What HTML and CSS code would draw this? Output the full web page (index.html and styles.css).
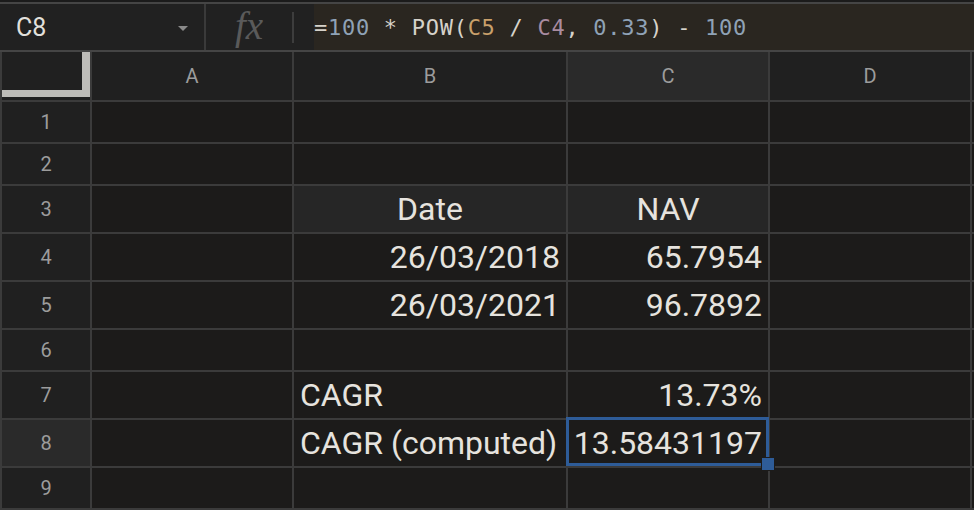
FILE: index.html
```html
<!DOCTYPE html>
<html lang="en">
<head>
<meta charset="utf-8">
<title>Sheet</title>
<link rel="stylesheet" href="styles.css">
</head>
<body>
<div class="app">
  <div class="fbar">
    <div class="namebox"><span class="ref">C8</span><span class="caret"></span></div>
    <div class="fx">fx</div>
    <div class="sep"></div>
    <div class="gap"></div>
    <div class="formula"><span class="op">=</span><span class="num">100</span><span class="op"> * POW(</span><span class="r1">C5</span><span class="op"> / </span><span class="r2">C4</span><span class="op">, </span><span class="num">0.33</span><span class="op">) - </span><span class="num">100</span></div>
  </div>
  <div class="sheet">
    <div class="hdr corner"><div class="corner-mark"></div></div>
    <div class="hdr col">A</div>
    <div class="hdr col">B</div>
    <div class="hdr col sel">C</div>
    <div class="hdr col">D</div>
    <div class="hdr col"></div>

    <div class="hdr row">1</div><div class="cell"></div><div class="cell"></div><div class="cell"></div><div class="cell"></div><div class="cell"></div>
    <div class="hdr row">2</div><div class="cell"></div><div class="cell"></div><div class="cell"></div><div class="cell"></div><div class="cell"></div>
    <div class="hdr row">3</div><div class="cell"></div><div class="cell th">Date</div><div class="cell th">NAV</div><div class="cell"></div><div class="cell"></div>
    <div class="hdr row">4</div><div class="cell"></div><div class="cell right">26/03/2018</div><div class="cell right">65.7954</div><div class="cell"></div><div class="cell"></div>
    <div class="hdr row">5</div><div class="cell"></div><div class="cell right">26/03/2021</div><div class="cell right">96.7892</div><div class="cell"></div><div class="cell"></div>
    <div class="hdr row">6</div><div class="cell"></div><div class="cell"></div><div class="cell"></div><div class="cell"></div><div class="cell"></div>
    <div class="hdr row">7</div><div class="cell"></div><div class="cell left">CAGR</div><div class="cell right">13.73%</div><div class="cell"></div><div class="cell"></div>
    <div class="hdr row sel">8</div><div class="cell"></div><div class="cell left">CAGR (computed)</div><div class="cell right active">13.58431197<div class="selbox"><div class="handle"></div></div></div><div class="cell"></div><div class="cell"></div>
    <div class="hdr row">9</div><div class="cell"></div><div class="cell"></div><div class="cell"></div><div class="cell"></div><div class="cell"></div>
  </div>
</div>
</body>
</html>
```
FILE: styles.css
```css
html, body {
  margin: 0;
  padding: 0;
  background: #1b1b1b;
  width: 974px;
  height: 510px;
  overflow: hidden;
}
.app {
  padding-top: 2px;
  font-family: Roboto, "Liberation Sans", sans-serif;
}
.fbar {
  display: flex;
  height: 46px;
  border-top: 2px solid #454545;
  border-bottom: 2px solid #454545;
  background: #212121;
}
.namebox {
  box-sizing: border-box;
  border-right: 2px solid #3a3a3a;
  width: 206px;
  display: flex;
  align-items: center;
  justify-content: space-between;
  padding: 0 16px 0 16px;
}
.ref {
  color: #e2e0dc;
  font-size: 25px;
}
.caret {
  width: 0;
  height: 0;
  border-left: 5px solid transparent;
  border-right: 5px solid transparent;
  border-top: 5px solid #8a8a8a;
  margin-top: 2px;
}
.fx {
  width: 86px;
  display: flex;
  align-items: center;
  justify-content: center;
  font-family: "Liberation Serif", serif;
  font-style: italic;
  font-size: 39px;
  color: #5a5a5a;
  padding-bottom: 4px;
  box-sizing: border-box;
}
.sep {
  width: 2px;
  height: 31px;
  align-self: center;
  background: #3d3d3d;
}
.gap {
  width: 20px;
}
.formula {
  flex: 1;
  background: #2a2620;
  display: flex;
  align-items: center;
  font-family: "DejaVu Sans Mono", monospace;
  font-size: 22px;
  letter-spacing: 0.72px;
  white-space: pre;
  color: #d6d2ca;
}
.formula .num { color: #8fa2b6; }
.formula .r1 { color: #c9a06b; }
.formula .r2 { color: #a98ca1; }

.sheet {
  display: grid;
  grid-template-columns: 88px 200px 272px 200px 200px 1fr;
  grid-template-rows: 48px 40px 40px 46px 46px 46px 40px 46px 46px 40px;
  gap: 2px;
  padding: 0 0 2px 2px;
  background: #3b3b3b;
}
.hdr {
  background: #202020;
  color: #9c9c9c;
  font-size: 20px;
  display: flex;
  align-items: center;
  justify-content: center;
}
.hdr.sel {
  background: #2a2a2a;
}
.corner {
  align-items: flex-start;
  justify-content: flex-start;
}
.corner-mark {
  width: 80px;
  height: 38px;
  background: #202020;
  border-right: 8px solid #bdbcb8;
  border-bottom: 7px solid #bdbcb8;
}
.cell {
  background: #1c1b1a;
  color: #e6e3de;
  font-size: 32px;
  display: flex;
  align-items: center;
  white-space: nowrap;
  position: relative;
}
.cell.th {
  background: #262626;
  justify-content: center;
}
.cell.right {
  justify-content: flex-end;
  padding-right: 6px;
}
.cell.left {
  padding-left: 6px;
}
.selbox {
  position: absolute;
  z-index: 2;
  top: -3px;
  left: -2px;
  right: -1px;
  bottom: 0;
  border: 3px solid #2e5c98;
  pointer-events: none;
}
.handle {
  position: absolute;
  right: -9px;
  bottom: -8px;
  width: 12px;
  height: 12px;
  background: #2e5c98;
  border: 1px solid #1c1b1a;
}
```
